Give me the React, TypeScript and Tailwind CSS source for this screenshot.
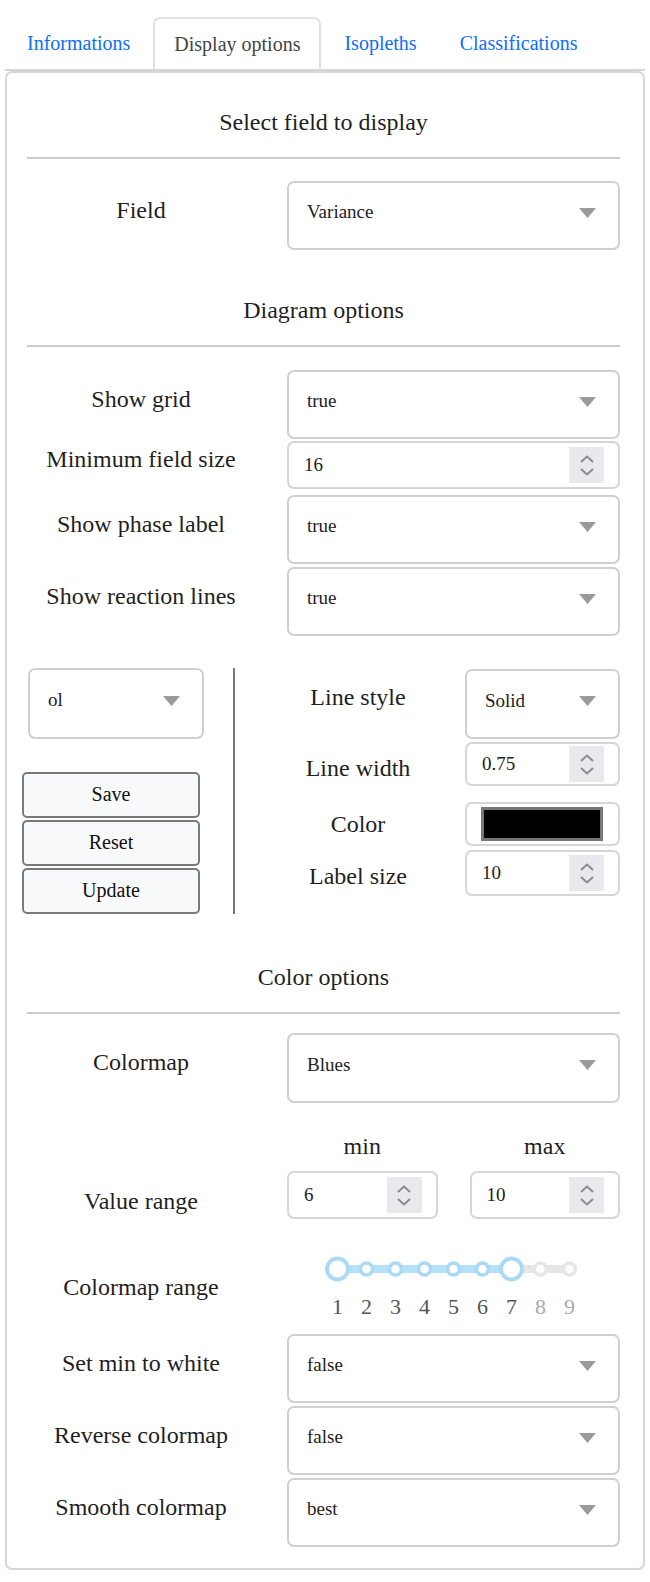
import React from 'react';

const Arrow = () => (
    <svg width="17" height="10" viewBox="0 0 17 10" className="shrink-0">
        <path d="M0 0 H17 L8.5 10 Z" fill="#9a9a9a" />
    </svg>
);

const Select = ({ value, className = 'h-[69px]' }: { value: string; className?: string }) => (
    <div className={`border-2 border-[#d0d0d0] rounded-[7px] bg-white flex items-center justify-between pl-[18px] pr-[22px] pb-[6px] ${className}`}>
        <span className="text-[19px] text-[#222]">{value}</span>
        <Arrow />
    </div>
);

const Spinner = () => (
    <div className="w-[35px] h-[36px] bg-[#e9e9ed] flex flex-col items-center justify-center gap-[5px]">
        <svg width="14" height="8" viewBox="0 0 14 8"><path d="M1 7 L7 1.5 L13 7" stroke="#8a8a90" strokeWidth="2" fill="none" /></svg>
        <svg width="14" height="8" viewBox="0 0 14 8"><path d="M1 1 L7 6.5 L13 1" stroke="#8a8a90" strokeWidth="2" fill="none" /></svg>
    </div>
);

const NumberInput = ({ value, className = 'h-[48px]' }: { value: string; className?: string }) => (
    <div className={`border-2 border-[#d3d6da] rounded-[7px] bg-white flex items-center justify-between pl-[15px] pr-[14px] ${className}`}>
        <span className="text-[19px] text-[#222]">{value}</span>
        <Spinner />
    </div>
);

const Label = ({ children, className = '' }: { children: React.ReactNode; className?: string }) => (
    <div className={`text-[24px] text-[#1f1f1f] text-center leading-[28px] ${className}`}>{children}</div>
);

const Heading = ({ children, className = '' }: { children: React.ReactNode; className?: string }) => (
    <div className={className}>
        <div className="text-[24px] text-[#1f1f1f] text-center leading-[28px]">{children}</div>
        <div className="mt-[21px] h-[2px] bg-[#cccccc]" />
    </div>
);

const Row = ({ label, children, className = '' }: { label: string; children: React.ReactNode; className?: string }) => (
    <div className={`grid grid-cols-[228px_1fr] gap-x-[32px] items-center ${className}`}>
        <Label className="pb-[12px]">{label}</Label>
        {children}
    </div>
);

const Button = ({ label }: { label: string }) => (
    <div className="h-[46px] w-[178px] border-2 border-[#7a7a7a] rounded-[5px] bg-[#f8f9fa] flex items-center justify-center text-[20px] text-[#111] pb-[3px]">
        {label}
    </div>
);

const RangeSlider = () => {
    const pts = Array.from({ length: 9 }, (_, i) => 14.5 + i * 29);
    const blue = '#a9d9f6';
    const gray = '#e6e6e6';
    return (
        <div className="flex flex-col items-center">
            <svg width="261" height="30" viewBox="0 0 261 30">
                <line x1={pts[6]} y1="15" x2={pts[8]} y2="15" stroke={gray} strokeWidth="8" />
                <line x1={pts[0]} y1="15" x2={pts[6]} y2="15" stroke="#b5e0f8" strokeWidth="8" />
                {pts.map((x, i) => {
                    const big = i === 0 || i === 6;
                    return (
                        <circle
                            key={i}
                            cx={x}
                            cy="15"
                            r={big ? 10.5 : 6}
                            fill="white"
                            stroke={i <= 6 ? blue : gray}
                            strokeWidth={big ? 4 : 3.5}
                        />
                    );
                })}
            </svg>
            <div className="flex mt-[10px]">
                {pts.map((_, i) => (
                    <div key={i} className={`w-[29px] text-center text-[22px] leading-[26px] ${i <= 6 ? 'text-[#555]' : 'text-[#aaa]'}`}>
                        {i + 1}
                    </div>
                ))}
            </div>
        </div>
    );
};

export default function App() {
    return (
        <div className="w-[650px] min-h-[1582px] bg-white pt-[17px] pb-[20px] font-['Liberation_Serif','Times_New_Roman',serif]">
            {/* Tabs */}
            <div className="mx-[5px] flex items-end border-b-2 border-[#d5d5d5] pl-[2px] gap-[3px]">
                <div className="h-[52px] px-[20px] flex items-center text-[20px] text-[#0d6efd]">Informations</div>
                <div className="h-[52px] px-[19px] flex items-center text-[20px] text-[#444] border-2 border-b-0 border-[#dde1e6] rounded-t-[7px] bg-white">Display options</div>
                <div className="h-[52px] px-[20px] flex items-center text-[20px] text-[#0d6efd]">Isopleths</div>
                <div className="h-[52px] px-[20px] flex items-center text-[20px] text-[#0d6efd]">Classifications</div>
            </div>

            {/* Panel */}
            <div className="mx-[5px] border-2 border-[#d6d6d6] rounded-[7px] pl-[20px] pr-[23px] pt-[35px] pb-[21px]">
                <Heading>Select field to display</Heading>
                <Row label="Field" className="mt-[22px]">
                    <Select value="Variance" />
                </Row>

                <Heading className="mt-[46px]">Diagram options</Heading>
                <Row label="Show grid" className="mt-[23px]">
                    <Select value="true" />
                </Row>
                <Row label="Minimum field size" className="mt-[2px]">
                    <NumberInput value="16" />
                </Row>
                <Row label="Show phase label" className="mt-[6px]">
                    <Select value="true" />
                </Row>
                <Row label="Show reaction lines" className="mt-[3px]">
                    <Select value="true" />
                </Row>

                {/* Line options */}
                <div className="mt-[32px] flex">
                    <div className="w-[206px] shrink-0">
                        <Select value="ol" className="ml-[1px] w-[176px] h-[71px]" />
                        <div className="mt-[33px] -ml-[5px] flex flex-col gap-[2px]">
                            <Button label="Save" />
                            <Button label="Reset" />
                            <Button label="Update" />
                        </div>
                    </div>
                    <div className="w-[2px] bg-[#777] shrink-0" />
                    <div className="flex-1 flex flex-col pt-[1px]">
                        <div className="flex items-center">
                            <Label className="w-[230px] pl-[16px] pb-[14px]">Line style</Label>
                            <Select value="Solid" className="flex-1 h-[70px]" />
                        </div>
                        <div className="flex items-center mt-[3px]">
                            <Label className="w-[230px] pl-[16px] pt-[8px]">Line width</Label>
                            <NumberInput value="0.75" className="flex-1 h-[44px]" />
                        </div>
                        <div className="flex items-center mt-[16px]">
                            <Label className="w-[230px] pl-[16px]">Color</Label>
                            <div className="flex-1 h-[44px] border-2 border-[#d3d6da] rounded-[7px] bg-white pl-[14px] pr-[15px] py-[3px]">
                                <div className="h-full border-[3px] border-[#777] bg-black" />
                            </div>
                        </div>
                        <div className="flex items-center mt-[4px]">
                            <Label className="w-[230px] pl-[16px] pt-[6px]">Label size</Label>
                            <NumberInput value="10" className="flex-1 h-[46px]" />
                        </div>
                    </div>
                </div>

                <Heading className="mt-[49px]">Color options</Heading>
                <Row label="Colormap" className="mt-[19px]">
                    <Select value="Blues" className="h-[70px]" />
                </Row>
                <div className="grid grid-cols-[228px_1fr_1fr] gap-x-[32px] mt-[29px]">
                    <div />
                    <Label className="text-[20px] leading-[24px]">min</Label>
                    <Label className="text-[20px] leading-[24px]">max</Label>
                </div>
                <div className="grid grid-cols-[228px_1fr_1fr] gap-x-[32px] items-center mt-[11px]">
                    <Label className="pt-[12px]">Value range</Label>
                    <NumberInput value="6" />
                    <NumberInput value="10" />
                </div>
                <div className="grid grid-cols-[228px_1fr] gap-x-[32px] items-center mt-[35px]">
                    <Label>Colormap range</Label>
                    <RangeSlider />
                </div>
                <Row label="Set min to white" className="mt-[14px]">
                    <Select value="false" />
                </Row>
                <Row label="Reverse colormap" className="mt-[3px]">
                    <Select value="false" />
                </Row>
                <Row label="Smooth colormap" className="mt-[3px]">
                    <Select value="best" />
                </Row>
            </div>
        </div>
    );
}
